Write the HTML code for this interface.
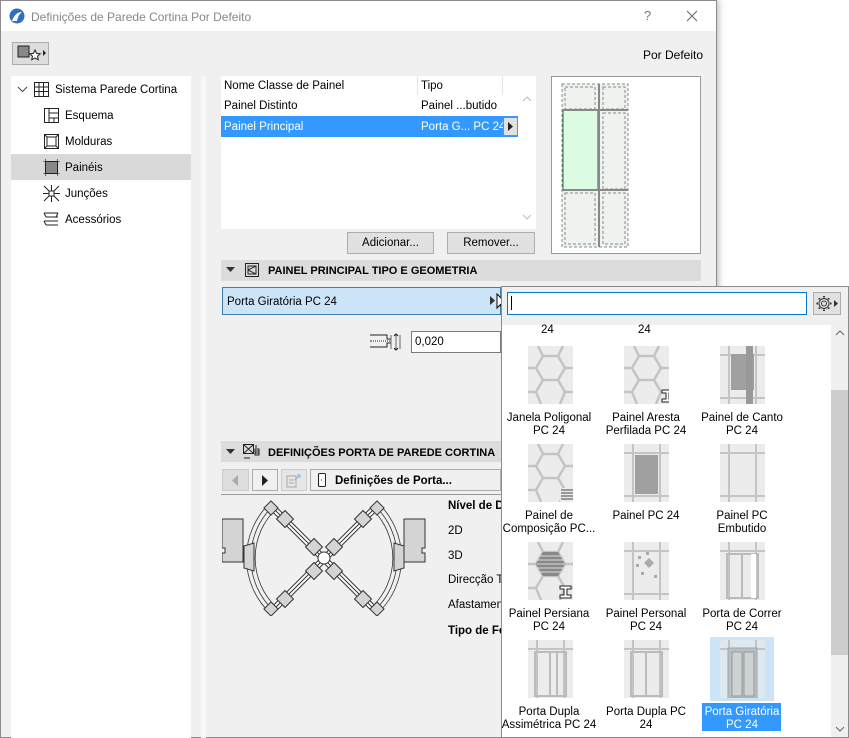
<!DOCTYPE html>
<html><head><meta charset="utf-8"><style>
*{margin:0;padding:0;box-sizing:border-box}
body{width:849px;height:738px;background:#fff;font-family:"Liberation Sans",sans-serif;font-size:11.5px;color:#000;position:relative;overflow:hidden}
.a{position:absolute}
.t{position:absolute;white-space:nowrap;margin-top:2px}
.b{font-weight:bold}
.btn{position:absolute;background:#e1e1e1;border:1px solid #adadad;text-align:center;line-height:21px}
.cap{position:absolute;text-align:center;width:96px;line-height:13px;font-size:11.5px;margin-top:2px}
</style></head><body>
<!-- dialog -->
<div class="a" style="left:0;top:0;width:717px;height:738px;background:#f0f0f0;border:1px solid #8c8c8c;box-shadow:2px 0 6px rgba(0,0,0,.25)"></div>
<div class="a" style="left:1px;top:1px;width:715px;height:30px;background:#fff"></div>
<svg class="a" style="left:9px;top:8px" width="16" height="16"><circle cx="8" cy="8" r="7.5" fill="#2f6fc4"/><path d="M3 13 Q6 4 13 4 Q9 7 8 13Z" fill="#fff"/></svg>
<div class="t" style="left:31px;top:8px;font-size:12px;color:#888">Definições de Parede Cortina Por Defeito</div>
<div class="t" style="left:644px;top:6px;font-size:13px;color:#777">?</div>
<svg class="a" style="left:686px;top:10px" width="12" height="12"><path d="M1 1L11 11M11 1L1 11" stroke="#666" stroke-width="1"/></svg>
<div class="a" style="left:12px;top:42px;width:37px;height:23px;background:#ddd;border:1px solid #adadad"></div>
<svg class="a" style="left:14px;top:43px" width="34" height="21"><rect x="4" y="3" width="11" height="11" fill="#888" stroke="#222"/><path d="M21 7l1.6 3.4 3.6.4-2.7 2.4.8 3.6-3.3-1.9-3.3 1.9.8-3.6-2.7-2.4 3.6-.4z" fill="#fff" stroke="#222"/><path d="M29 7l3 3-3 3z" fill="#222"/></svg>
<div class="t" style="left:643px;top:46px;font-size:12px">Por Defeito</div>
<!-- left tree -->
<div class="a" style="left:11px;top:76px;width:180px;height:662px;background:#fff"></div>
<div class="a" style="left:201px;top:76px;width:5px;height:662px;background:#f7f7f7"></div>
<div class="a" style="left:11px;top:154px;width:180px;height:26px;background:#d9d9d9"></div>
<svg class="a" style="left:17px;top:85px" width="12" height="10"><path d="M1 2l4.5 4.5L10 2" stroke="#444" fill="none"/></svg>
<svg class="a" style="left:33px;top:81px" width="17" height="17"><path d="M1.5 1.5h14v14h-14zM1.5 6h14M1.5 10.5h14M6 1.5v14M10.5 1.5v14" stroke="#222" fill="none"/></svg>
<div class="t" style="left:55px;top:82px">Sistema Parede Cortina</div>
<svg class="a" style="left:43px;top:107px" width="17" height="17"><path d="M1.5 1.5h14v14h-14zM6 1.5v14M6 6h9.5M6 11h9.5M11 11v4.5" stroke="#222" fill="none"/></svg>
<div class="t" style="left:65px;top:108px">Esquema</div>
<svg class="a" style="left:43px;top:133px" width="17" height="17"><path d="M1.5 1.5h14v14h-14zM4 4h9v9h-9zM1.5 1.5L4 4M15.5 1.5L13 4M1.5 15.5L4 13M15.5 15.5L13 13" stroke="#222" fill="none"/></svg>
<div class="t" style="left:65px;top:134px">Molduras</div>
<svg class="a" style="left:43px;top:159px" width="17" height="17"><rect x="2.5" y="2.5" width="12" height="12" fill="#888" stroke="#222"/><path d="M0 2.5h17M0 14.5h17M2.5 0v17M14.5 0v17" stroke="#222" stroke-width=".6"/></svg>
<div class="t" style="left:65px;top:160px">Painéis</div>
<svg class="a" style="left:43px;top:185px" width="17" height="17"><rect x="6" y="6" width="5" height="5" fill="none" stroke="#222"/><path d="M1 1l5 5M16 1l-5 5M1 16l5-5M16 16l-5-5M8.5 0v6M8.5 11v6M0 8.5h6M11 8.5h6" stroke="#222"/></svg>
<div class="t" style="left:65px;top:186px">Junções</div>
<svg class="a" style="left:43px;top:211px" width="17" height="17"><path d="M1 2h14M3 6h12M1 10h14M3 14h12M1 2l2 4M1 10l2 4M15 2l-2 4" stroke="#222" fill="none"/></svg>
<div class="t" style="left:65px;top:212px">Acessórios</div>
<!-- list -->
<div class="a" style="left:221px;top:76px;width:297px;height:153px;background:#fff"></div>
<div class="a" style="left:518px;top:76px;width:18px;height:153px;background:#fff"></div>
<div class="a" style="left:417px;top:76px;width:1px;height:19px;background:#e5e5e5"></div>
<div class="a" style="left:502px;top:76px;width:1px;height:19px;background:#e5e5e5"></div>
<div class="t" style="left:224px;top:78px">Nome Classe de Painel</div>
<div class="t" style="left:421px;top:78px">Tipo</div>
<div class="t" style="left:224px;top:98px">Painel Distinto</div>
<div class="t" style="left:421px;top:98px">Painel ...butido</div>
<div class="a" style="left:221px;top:116px;width:297px;height:21px;background:#3399ff"></div>
<div class="t" style="left:224px;top:119px;color:#fff">Painel Principal</div>
<div class="t" style="left:421px;top:119px;color:#fff">Porta G... PC 24</div>
<div class="a" style="left:503px;top:117px;width:15px;height:19px;background:#e1e1e1;border:1px solid #888"></div>
<svg class="a" style="left:507px;top:122px" width="8" height="9"><path d="M1 0l5 4.5L1 9z" fill="#222"/></svg>
<svg class="a" style="left:521px;top:95px" width="12" height="130"><path d="M2 6l4-4 4 4M2 120l4 4 4-4" stroke="#bbb" fill="none"/></svg>
<div class="btn" style="left:347px;top:232px;width:87px;height:22px">Adicionar...</div>
<div class="btn" style="left:447px;top:232px;width:88px;height:22px">Remover...</div>
<!-- preview -->
<div class="a" style="left:551px;top:76px;width:150px;height:178px;background:#fff;border:1px solid #999"></div>
<svg class="a" style="left:551px;top:76px" width="150" height="178">
<rect x="11" y="8" width="66" height="163" fill="#eff3ef"/>
<rect x="12" y="34" width="35" height="80" fill="#dbfbe3" stroke="#276b36"/>
<g stroke="#888" fill="none" stroke-dasharray="3 2"><rect x="11" y="8" width="66" height="163"/><rect x="14" y="11" width="30" height="22"/><rect x="52" y="11" width="22" height="22"/><rect x="52" y="37" width="22" height="76"/><rect x="14" y="117" width="30" height="51"/><rect x="52" y="117" width="22" height="51"/></g>
<path d="M48 8v163M11 34h66M11 114h66" stroke="#888" stroke-width="2"/>
</svg>
<!-- section 1 -->
<div class="a" style="left:221px;top:260px;width:480px;height:21px;background:#dcdcdc"></div>
<svg class="a" style="left:226px;top:267px" width="9" height="6"><path d="M0 0h9L4.5 5z" fill="#333"/></svg>
<svg class="a" style="left:244px;top:262px" width="16" height="16"><path d="M1.5 1.5h13v13h-13zM4 4h8v8h-8zM4 8L12 4M4 8l8 4" stroke="#222" fill="none"/></svg>
<div class="t b" style="left:268px;top:263px;font-size:11px">PAINEL PRINCIPAL TIPO E GEOMETRIA</div>
<div class="a" style="left:222px;top:287px;width:279px;height:28px;background:#cce4f7;border:1px solid #3c7fb1"></div>
<div class="t" style="left:227px;top:294px">Porta Giratória PC 24</div>
<svg class="a" style="left:490px;top:296px" width="6" height="9"><path d="M0 0l5 4.5L0 9z" fill="#333"/></svg>
<svg class="a" style="left:496px;top:293px" width="14" height="20"><path d="M1 1v14l3.5-3.5 2.5 6 2-1-2.5-5.5H11z" fill="#fff" stroke="#000"/></svg>
<svg class="a" style="left:369px;top:331px" width="36" height="22"><path d="M1 4h17v4h4M1 16h17v-4h4M1 10h20" stroke="#222" fill="none"/><path d="M3 10h17" stroke="#fff" stroke-dasharray="1 1"/><path d="M22 4v14M31 4v14M27 3v16M25 4h4M25 18h4" stroke="#666" fill="none"/><path d="M25 5l2-2 2 2M25 17l2 2 2-2" stroke="#222" fill="none"/></svg>
<div class="a" style="left:411px;top:331px;width:90px;height:22px;background:#fff;border:1px solid #7a7a7a"></div>
<div class="t" style="left:415px;top:334px">0,020</div>
<!-- section 2 -->
<div class="a" style="left:221px;top:441px;width:480px;height:21px;background:#dcdcdc"></div>
<svg class="a" style="left:226px;top:449px" width="9" height="6"><path d="M0 0h9L4.5 5z" fill="#333"/></svg>
<svg class="a" style="left:242px;top:443px" width="18" height="18"><path d="M1.5 1.5h10v9h-10zM1.5 1.5l10 9M11.5 1.5l-10 9M13 6h4v6h-4zM13 8h4M13 10h4M2 15h6M14 2v3" stroke="#222" fill="none"/></svg>
<div class="t b" style="left:268px;top:445px;font-size:11px">DEFINIÇÕES PORTA DE PAREDE CORTINA</div>
<div class="a" style="left:222px;top:469px;width:27px;height:22px;background:#ddd;border:1px solid #ccc"></div>
<svg class="a" style="left:232px;top:475px" width="7" height="11"><path d="M6 0L0 5.5 6 11z" fill="#aaa"/></svg>
<div class="a" style="left:252px;top:469px;width:26px;height:22px;background:#f0f0f0;border:1px solid #adadad"></div>
<svg class="a" style="left:262px;top:475px" width="7" height="11"><path d="M0 0l6 5.5L0 11z" fill="#222"/></svg>
<div class="a" style="left:281px;top:469px;width:26px;height:22px;background:#e6e6e6;border:1px solid #ccc"></div>
<svg class="a" style="left:284px;top:472px" width="20" height="17"><path d="M3 4h9v11H3zM5 8h5M5 11h5" stroke="#aaa" fill="none"/><path d="M11 8l4-4M13 3h3v3" stroke="#7ab0e0" fill="none"/></svg>
<div class="a" style="left:310px;top:469px;width:191px;height:22px;background:#f0f0f0;border:1px solid #adadad"></div>
<svg class="a" style="left:318px;top:473px" width="8" height="14"><rect x=".5" y=".5" width="7" height="13" rx="1" fill="#fff" stroke="#222"/><path d="M3 7h1" stroke="#222"/></svg>
<div class="t b" style="left:335px;top:473px;font-size:11.5px">Definições de Porta...</div>
<div class="a" style="left:221px;top:494px;width:280px;height:1px;background:#999"></div>
<!-- door plan -->
<svg class="a" style="left:222px;top:500px" width="205" height="116" viewBox="222 500 205 116">
<g fill="#d4d4d4" stroke="#333" stroke-width="1">
<path d="M222 519h21v43h-21v-9h3v-5h-3z"/><path d="M425 519h-21v43h21v-9h-3v-5h3z"/>
</g>
<g fill="none" stroke="#333" stroke-width=".8">
<path d="M273 506A72 72 0 0 0 273 610"/><path d="M270 503A76 76 0 0 0 270 613"/><path d="M276 509A68 68 0 0 0 276 607"/>
<path d="M375 506A72 72 0 0 1 375 610"/><path d="M378 503A76 76 0 0 1 378 613"/><path d="M372 509A68 68 0 0 1 372 607"/>
</g>
<g stroke="#333" stroke-width="7"><path d="M276 511L372 607M372 511L276 607"/></g>
<g stroke="#fff" stroke-width="5"><path d="M276 511L372 607M372 511L276 607"/></g>
<g stroke="#333" stroke-width="1"><path d="M276 511L372 607M372 511L276 607"/></g>
<g fill="#d4d4d4" stroke="#333"><rect x="266" y="503" width="10" height="10" transform="rotate(45 271 508)"/><rect x="372" y="503" width="10" height="10" transform="rotate(45 377 508)"/><rect x="266" y="604" width="10" height="10" transform="rotate(45 271 609)"/><rect x="372" y="604" width="10" height="10" transform="rotate(45 377 609)"/>
<rect x="279" y="513" width="12" height="12" transform="rotate(45 285 519)"/><rect x="357" y="513" width="12" height="12" transform="rotate(45 363 519)"/><rect x="279" y="593" width="12" height="12" transform="rotate(45 285 599)"/><rect x="357" y="593" width="12" height="12" transform="rotate(45 363 599)"/>
<rect x="308" y="541" width="12" height="12" transform="rotate(45 314 547)"/><rect x="328" y="541" width="12" height="12" transform="rotate(45 334 547)"/><rect x="308" y="565" width="12" height="12" transform="rotate(45 314 571)"/><rect x="328" y="565" width="12" height="12" transform="rotate(45 334 571)"/>
<path d="M244 546l10-3v28l-10-3z"/><path d="M404 546l-10-3v28l10-3z"/></g>
<circle cx="324" cy="558" r="6" fill="#fff" stroke="#333"/>
</svg>
<div class="t b" style="left:448px;top:498px">Nível de D</div>
<div class="t" style="left:448px;top:523px">2D</div>
<div class="t" style="left:448px;top:548px">3D</div>
<div class="t" style="left:448px;top:572px">Direcção T</div>
<div class="t" style="left:448px;top:597px">Afastamen</div>
<div class="t b" style="left:448px;top:623px">Tipo de Fo</div>
<!-- popup -->
<div class="a" style="left:501px;top:286px;width:348px;height:452px;background:#fff;border:1px solid #8c8c8c"></div>
<div class="a" style="left:502px;top:287px;width:346px;height:38px;background:#f0f0f0"></div>
<div class="a" style="left:507px;top:292px;width:300px;height:23px;background:#fff;border:1px solid #0078d7"></div>
<div class="a" style="left:511px;top:296px;width:1px;height:14px;background:#000"></div>
<div class="a" style="left:813px;top:292px;width:28px;height:23px;background:#e1e1e1;border:1px solid #adadad"></div>
<svg class="a" style="left:815px;top:294px" width="24" height="19"><path d="M9 3.5v-1.5M9 15.5v1.5M3 9.5h-1.5M15 9.5h1.5M4.8 5.3l-1-1M13.2 13.7l1 1M4.8 13.7l-1 1M13.2 5.3l1-1" stroke="#333" stroke-width="2"/><circle cx="9" cy="9.5" r="5" fill="#e1e1e1" stroke="#333"/><circle cx="9" cy="9.5" r="2.5" fill="none" stroke="#333"/><path d="M19 6l4 3.5-4 3.5z" fill="#333"/></svg>
<div class="a" style="left:831px;top:325px;width:17px;height:412px;background:#f0f0f0"></div>
<div class="a" style="left:831px;top:390px;width:17px;height:265px;background:#cdcdcd"></div>
<svg class="a" style="left:834px;top:327px" width="12" height="410"><path d="M2 8l4-4 4 4M2 400l4 4 4-4" stroke="#666" fill="none"/></svg>
<svg width="0" height="0" style="position:absolute"><defs>
<g id="hex"><rect width="45" height="58" fill="#ececec"/><g stroke="#c4c4c4" stroke-width="2.5" fill="none" stroke-linejoin="round"><path d="M8 22L15 10H30L37 22L30 34H15Z"/><path d="M15 10L10 0M30 10L35 0M37 22H45M8 22H0M15 34L8 46L13 58M30 34L37 46L32 58M37 46H45M8 46H0"/></g></g>
<g id="grid"><rect width="45" height="58" fill="#ececec"/><path d="M9 0v58M36 0v58M0 9h45M0 52h45" stroke="#c4c4c4" stroke-width="2"/></g>
<g id="door"><rect width="45" height="58" fill="#ececec"/><path d="M9 0v58M36 0v58M0 9h45" stroke="#c4c4c4" stroke-width="2"/><rect x="7" y="12" width="31" height="44" fill="none" stroke="#bbb" stroke-width="2"/><path d="M22 12v44" stroke="#bbb" stroke-width="2"/></g>
<g id="ibeam"><path d="M1 1h11v3H8v6h4v3H1v-3h4V4H1z" fill="#fff" stroke="#222"/></g>
</defs></svg>
<div class="t" style="left:541px;top:322px">24</div>
<div class="t" style="left:638px;top:322px">24</div>
<svg class="a" style="left:528px;top:346px" width="45" height="58"><use href="#hex"/></svg>
<svg class="a" style="left:624px;top:346px" width="45" height="58"><use href="#hex"/><use href="#ibeam" x="37" y="43"/></svg>
<svg class="a" style="left:720px;top:346px" width="45" height="58"><use href="#grid"/><rect x="11" y="8" width="23" height="36" fill="#a0a0a0"/><rect x="26" y="0" width="7" height="58" fill="#999"/></svg>
<div class="cap" style="left:501px;top:410px">Janela Poligonal<br>PC 24</div>
<div class="cap" style="left:598px;top:410px">Painel Aresta<br>Perfilada PC 24</div>
<div class="cap" style="left:694px;top:410px">Painel de Canto<br>PC 24</div>
<svg class="a" style="left:528px;top:444px" width="45" height="58"><use href="#hex"/><rect x="32" y="44" width="13" height="14" fill="#ececec"/><g stroke="#444"><path d="M33 46h12M33 49h12M33 52h12M33 55h12"/></g></svg>
<svg class="a" style="left:624px;top:444px" width="45" height="58"><use href="#grid"/><rect x="11" y="11" width="23" height="39" fill="#a0a0a0"/></svg>
<svg class="a" style="left:720px;top:444px" width="45" height="58"><use href="#grid"/></svg>
<div class="cap" style="left:501px;top:508px">Painel de<br>Composição PC...</div>
<div class="cap" style="left:598px;top:508px">Painel PC 24</div>
<div class="cap" style="left:694px;top:508px">Painel PC<br>Embutido</div>
<svg class="a" style="left:528px;top:542px" width="45" height="58"><use href="#hex"/><path d="M15 10H30L37 22L30 34H15L8 22Z" fill="#888"/><g stroke="#ddd"><path d="M9 14h28M9 18h28M9 22h28M9 26h28M9 30h28"/></g><use href="#ibeam" x="31" y="43"/></svg>
<svg class="a" style="left:624px;top:542px" width="45" height="58"><use href="#grid"/><g fill="#aaa"><path d="M25 16l5 5-5 5-5-5z"/><rect x="14" y="14" width="3" height="3"/><rect x="12" y="22" width="3" height="3"/><rect x="17" y="30" width="3" height="3"/><rect x="30" y="33" width="3" height="3"/><rect x="22" y="10" width="3" height="3"/></g></svg>
<svg class="a" style="left:720px;top:542px" width="45" height="58"><use href="#door"/><rect x="31" y="12" width="5" height="44" fill="#fff"/></svg>
<div class="cap" style="left:501px;top:606px">Painel Persiana<br>PC 24</div>
<div class="cap" style="left:598px;top:606px">Painel Personal<br>PC 24</div>
<div class="cap" style="left:694px;top:606px">Porta de Correr<br>PC 24</div>
<svg class="a" style="left:528px;top:640px" width="45" height="58"><use href="#door"/><path d="M29 12v44" stroke="#bbb" stroke-width="2"/></svg>
<svg class="a" style="left:624px;top:640px" width="45" height="58"><use href="#door"/></svg>
<div class="a" style="left:710px;top:637px;width:64px;height:64px;background:#cce4f7"></div>
<svg class="a" style="left:720px;top:640px" width="45" height="58"><rect width="45" height="58" fill="#dde8ef"/><path d="M9 0v58M36 0v58M0 9h45" stroke="#c4c4c4" stroke-width="2"/><rect x="8" y="8" width="29" height="50" fill="#b8bec2" stroke="#9aa"/><rect x="12" y="12" width="10" height="44" fill="#cdd2d5" stroke="#999"/><rect x="24" y="12" width="10" height="44" fill="#cdd2d5" stroke="#999"/></svg>
<div class="cap" style="left:501px;top:704px">Porta Dupla<br>Assimétrica PC 24</div>
<div class="cap" style="left:598px;top:704px">Porta Dupla PC<br>24</div>
<div class="a" style="left:702px;top:703px;width:79px;height:28px;background:#3399ff"></div>
<div class="cap" style="left:694px;top:704px;color:#fff">Porta Giratória<br>PC 24</div>
</body></html>
